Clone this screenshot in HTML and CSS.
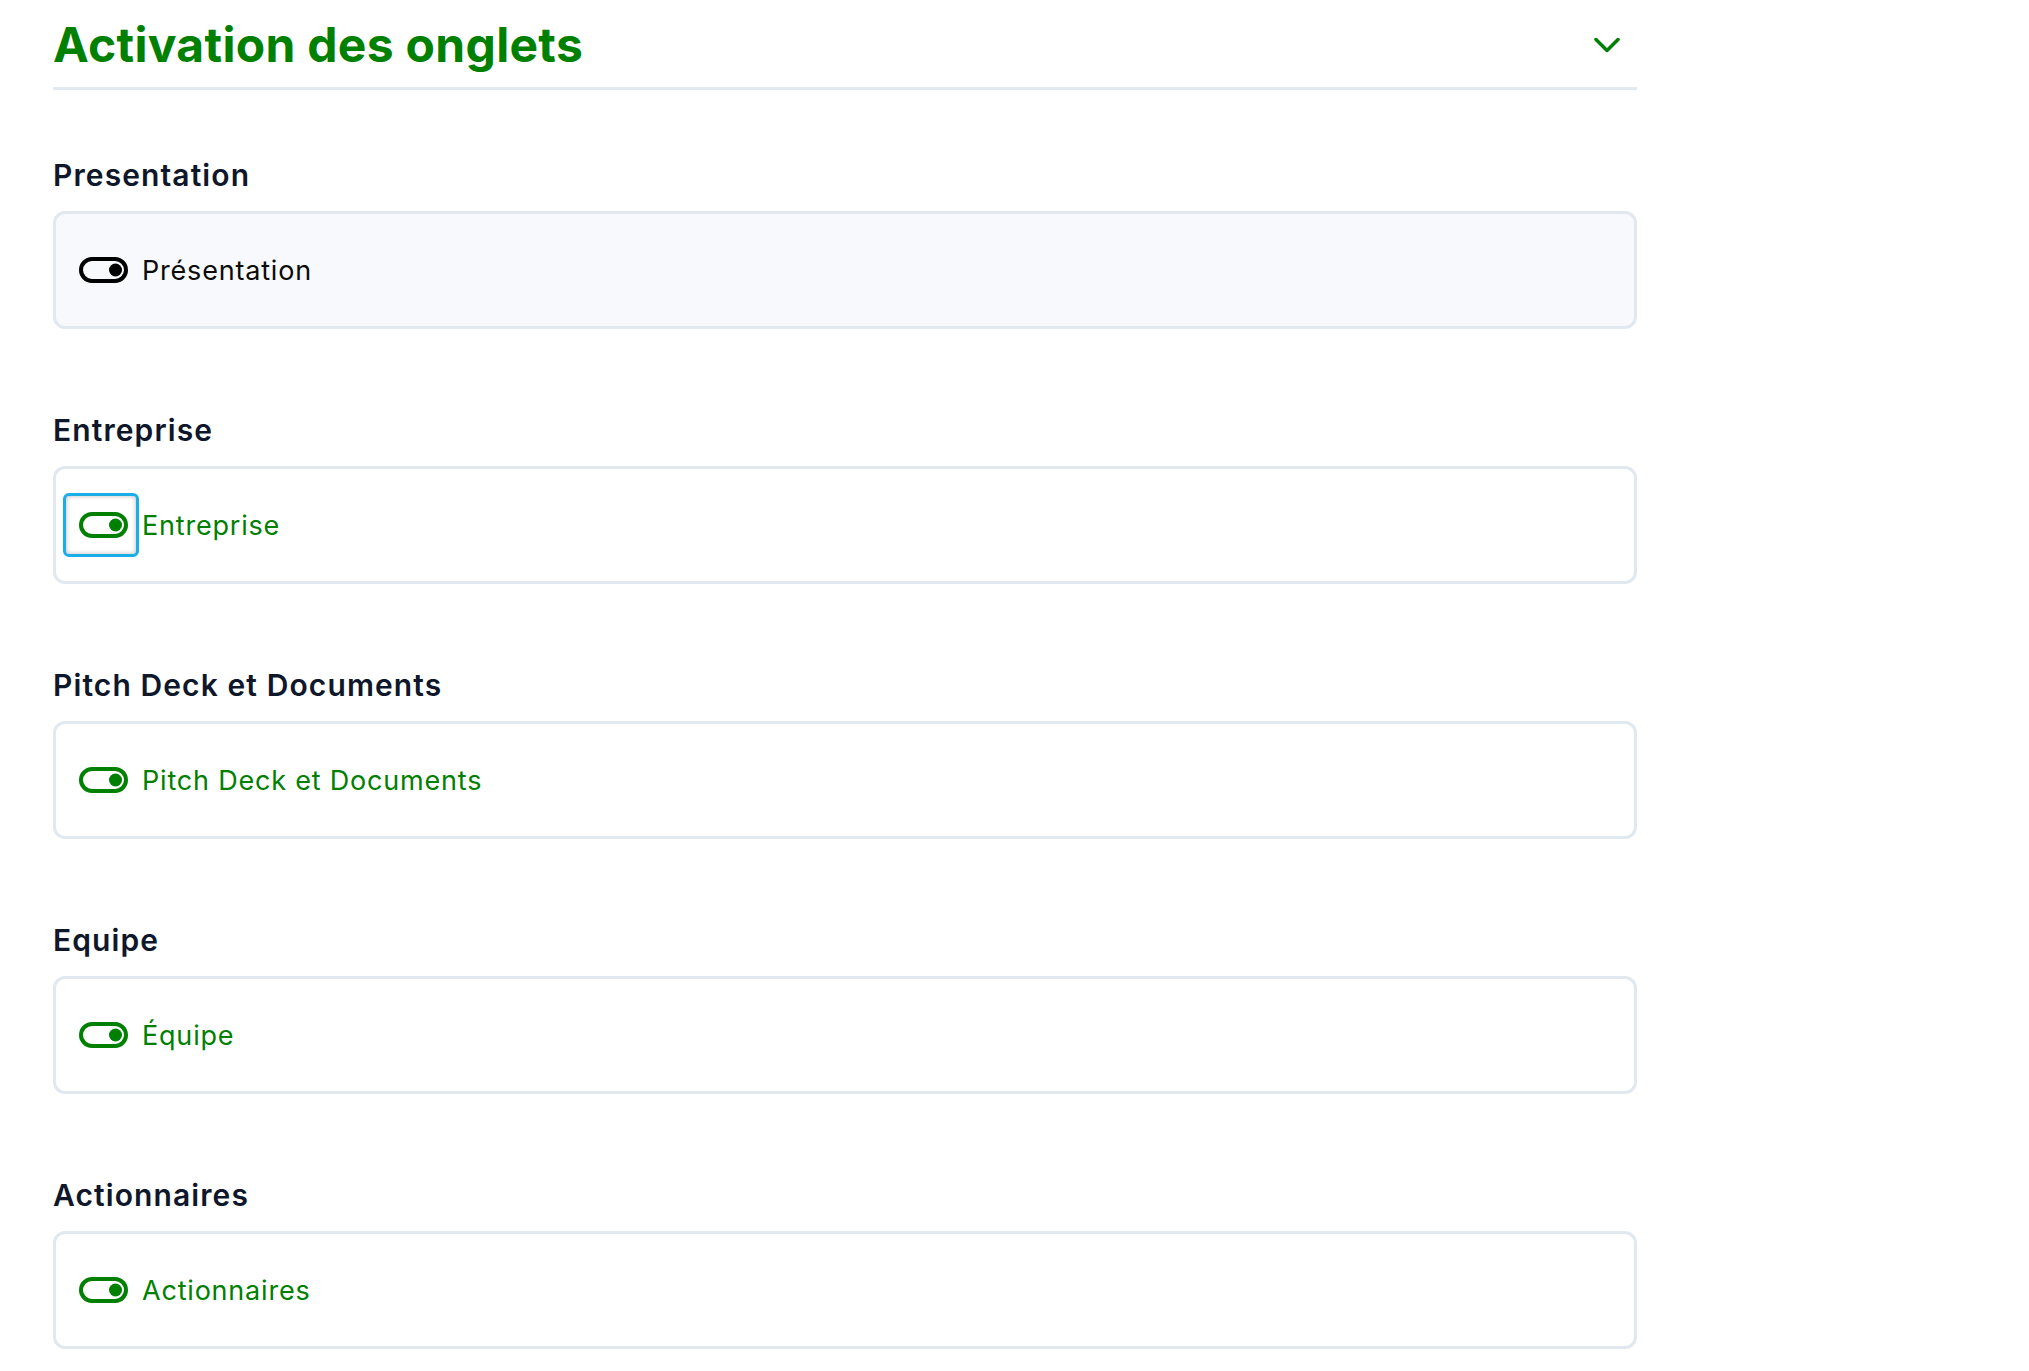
FILE: index.html
```html
<!DOCTYPE html>
<html lang="fr">
<head>
    <meta charset="UTF-8">
    <meta name="viewport" content="width=device-width, initial-scale=1.0">
    <title>Activation des onglets</title>
    <link rel="stylesheet" href="styles.css">
</head>
<body>
    <div class="panel">
        <header class="panel-header">
            <h1>Activation des onglets</h1>
            <button class="collapse-button" type="button" aria-label="Replier">
                <svg width="26" height="16" viewBox="0 0 26 16" fill="none" stroke="currentColor" stroke-width="3.5" stroke-linecap="round" stroke-linejoin="round">
                    <polyline points="2,2.5 13,13.5 24,2.5"/>
                </svg>
            </button>
        </header>

        <section class="tab-setting">
            <h3>Presentation</h3>
            <div class="toggle-box disabled-box">
                <button class="toggle off" type="button" aria-pressed="false">
                    <svg width="49" height="26" viewBox="0 0 49 26"><rect x="2" y="2" width="45" height="22" rx="11" fill="none" stroke="currentColor" stroke-width="4"/><circle cx="36.5" cy="13" r="6.5" fill="currentColor"/></svg>
                </button>
                <span class="toggle-label off">Présentation</span>
            </div>
        </section>

        <section class="tab-setting">
            <h3>Entreprise</h3>
            <div class="toggle-box">
                <button class="toggle on focused" type="button" aria-pressed="true">
                    <svg width="49" height="26" viewBox="0 0 49 26"><rect x="2" y="2" width="45" height="22" rx="11" fill="none" stroke="currentColor" stroke-width="4"/><circle cx="36.5" cy="13" r="6.5" fill="currentColor"/></svg>
                </button>
                <span class="toggle-label on">Entreprise</span>
            </div>
        </section>

        <section class="tab-setting">
            <h3>Pitch Deck et Documents</h3>
            <div class="toggle-box">
                <button class="toggle on" type="button" aria-pressed="true">
                    <svg width="49" height="26" viewBox="0 0 49 26"><rect x="2" y="2" width="45" height="22" rx="11" fill="none" stroke="currentColor" stroke-width="4"/><circle cx="36.5" cy="13" r="6.5" fill="currentColor"/></svg>
                </button>
                <span class="toggle-label on">Pitch Deck et Documents</span>
            </div>
        </section>

        <section class="tab-setting">
            <h3>Equipe</h3>
            <div class="toggle-box">
                <button class="toggle on" type="button" aria-pressed="true">
                    <svg width="49" height="26" viewBox="0 0 49 26"><rect x="2" y="2" width="45" height="22" rx="11" fill="none" stroke="currentColor" stroke-width="4"/><circle cx="36.5" cy="13" r="6.5" fill="currentColor"/></svg>
                </button>
                <span class="toggle-label on">Équipe</span>
            </div>
        </section>

        <section class="tab-setting">
            <h3>Actionnaires</h3>
            <div class="toggle-box">
                <button class="toggle on" type="button" aria-pressed="true">
                    <svg width="49" height="26" viewBox="0 0 49 26"><rect x="2" y="2" width="45" height="22" rx="11" fill="none" stroke="currentColor" stroke-width="4"/><circle cx="36.5" cy="13" r="6.5" fill="currentColor"/></svg>
                </button>
                <span class="toggle-label on">Actionnaires</span>
            </div>
        </section>
    </div>
</body>
</html>
```

FILE: styles.css
```css
body {
    margin: 0;
    font-family: Inter, "Noto Sans", sans-serif;
    background-color: #ffffff;
    color: #0f172a;
}
.panel {
    width: 1584px;
    margin-left: 53px;
}
.panel-header {
    display: flex;
    justify-content: space-between;
    align-items: center;
    padding: 15px 17px 12px 0;
    border-bottom: 3px solid #e2e8f0;
    margin-bottom: 67px;
}
.panel-header h1 {
    margin: 0;
    font-size: 48px;
    line-height: 60px;
    font-weight: 700;
    letter-spacing: 0.3px;
    color: #008000;
}
.collapse-button {
    display: flex;
    padding: 0;
    border: none;
    background: none;
    color: #008000;
    cursor: pointer;
}
.tab-setting {
    margin-bottom: 83px;
}
.tab-setting h3 {
    margin: 0 0 18px 0;
    font-size: 30px;
    line-height: 36px;
    font-weight: 600;
    letter-spacing: 1.1px;
    color: #0f172a;
}
.toggle-box {
    display: flex;
    align-items: center;
    gap: 14px;
    height: 118px;
    box-sizing: border-box;
    padding: 0 23px;
    border: 3px solid #e2e8f0;
    border-radius: 12px;
    background-color: #ffffff;
}
.disabled-box {
    background-color: #f7f9fc;
}
.toggle {
    position: relative;
    display: flex;
    padding: 0;
    border: none;
    background: none;
    cursor: pointer;
}
.toggle.off {
    color: #000000;
}
.toggle.on {
    color: #008000;
}
.toggle.focused::after {
    content: "";
    position: absolute;
    top: -19px;
    bottom: -19px;
    left: -16px;
    right: -11px;
    border: 3px solid #1aaee8;
    border-radius: 6px;
    box-shadow: inset 0 0 5px rgba(0, 0, 0, 0.28);
}
.toggle-label {
    font-size: 27px;
    line-height: 33px;
    letter-spacing: 0.8px;
}
.toggle-label.off {
    color: #0b0b0b;
}
.toggle-label.on {
    color: #008000;
}
```
